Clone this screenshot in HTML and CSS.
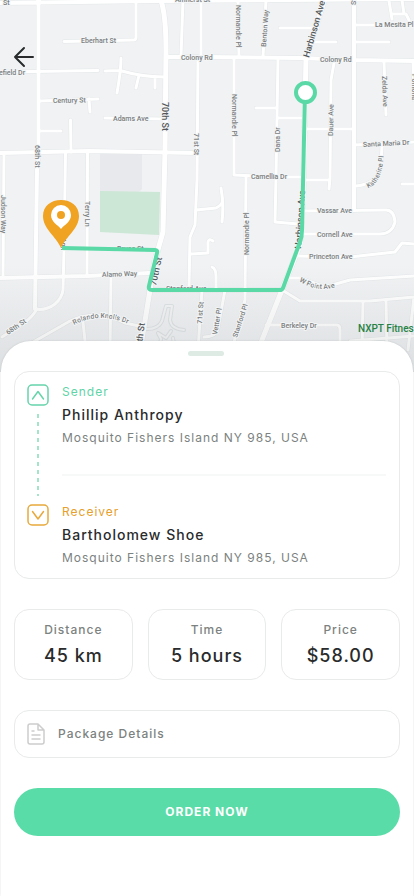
FILE: index.html
```html
<!DOCTYPE html>
<html lang="en">
<head>
<meta charset="utf-8">
<meta name="viewport" content="width=device-width, initial-scale=1">
<title>Order delivery</title>
<link rel="stylesheet" href="styles.css">
</head>
<body>
<main class="screen">
  <section class="map" aria-label="Delivery route">
    <svg class="map-art" viewBox="0 0 414 372" preserveAspectRatio="xMidYMin slice" role="img" aria-label="Street map">
      <defs>
        <g id="minor">
          <path d="M64 41.500L134 40Q136 40 136 37V2"/>
          <path d="M0 72L98 70.500M105 71L120 70.500Q142 77 165 77M121 58Q121 70 117 93M139 75L136 88M155 77V88"/>
          <path d="M40 101L98 99M89 99L90 112M105 118L163 119M70.500 120L71 152M40 131H61"/>
          <path d="M4 153L3 277M65.500 153L64 250L63 290Q62 298 55 304Q46 311 35 309M87.500 153L87 275"/>
          <path d="M183 0L181 56M201 0V56M198 57L197 180L195 225L190 237L189 288M191 254L208 253V242Q209 238 213 241M196 210L216 208Q220 206 222 203M221 188Q224 204 222 222"/>
          <path d="M238 0L239 57M266 0L263 57M280 28H318M312 42H336M234 58V175L275 177H300M246 177L245 300L232 350"/>
          <path d="M278 58L276 177L275 222L298 224M256 108H277M277 118H301M334 63L331 80L330 178L329 189M303 129H354M303 180H330"/>
          <path d="M354 25H414M354 42H389M384 62L386 115M413 62L414 100M354 145L414 142M382 145L381 165Q378 184 356 186M402 184H414"/>
          <path d="M389 1L392 19M391 14H406L409 20M402 0L404 14"/>
          <path d="M303 211L386 210Q394 210 395 222Q392 234 380 234H303M297 256L350 257L395 252L402 243L414 244M288 278H300L325 287L350 280L414 276"/>
          <path d="M282 290L300 301H370L414 297M363 302L362 350M386 301L387 350M414 297L408 350M266 325H337Q340 325 340 330V350M350 341L414 336"/>
          <path d="M202 290L198 350M225 290L218 328Q216 337 204 337M212 267Q216 269 216 276V288"/>
          <path d="M111 278L110 350M28 345L70 321Q98 308 125 323L144 327M83 322L86 350"/>
          <path d="M37 309Q31 319 22 324L2 337"/>
        </g>
        <g id="court">
          <path d="M144 329Q158 330 162 321L166 306H172L170 320Q171 329 184 330M158 333L166 338L171 331M160 344L161 339L158 333M173 338L174 344"/>
        </g>
        <g id="major">
          <path d="M0 3L160 1L414 -1M38.500 0V155L37 170L35 309M0 153L90 151L197 153M0 278L87 276L150 273M168 57H204L300 58L354 60L414 61M354 0V210M149 290H282"/>
        </g>
        <g id="avenue">
          <path d="M160 -2Q166 12 166 50L165 150L163 232L155 260L150 290L140 352M325 -2L306 58L303 200L300 245L282 290L258 350"/>
        </g>
        <linearGradient id="shade" x1="0" y1="0" x2="0" y2="1">
          <stop offset="0" stop-color="#777c80" stop-opacity="0"/>
          <stop offset="1" stop-color="#777c80" stop-opacity=".16"/>
        </linearGradient>
      </defs>
      <rect class="land" width="414" height="372"/>
      <path class="block" d="M100 152H142V189L139 192H100Z"/>
      <path class="park" d="M100 191L160 192L159 235L100 232Z"/>
      <use href="#minor" class="road minor-edge"/>
      <use href="#court" class="road court-edge"/>
      <use href="#major" class="road major-edge"/>
      <use href="#avenue" class="road avenue-edge"/>
      <use href="#minor" class="road minor-fill"/>
      <use href="#court" class="road court-fill"/>
      <use href="#major" class="road major-fill"/>
      <use href="#avenue" class="road avenue-fill"/>
      <rect y="265" width="414" height="107" fill="url(#shade)"/>

      <g class="street">
        <text x="3" y="5">St</text>
        <text x="175" y="2">Amherst St</text>
        <text x="81" y="43">Eberhart St</text>
        <text x="-1" y="75">efield Dr</text>
        <text x="53" y="103" transform="rotate(-1 53 103)">Century St</text>
        <text x="113" y="121">Adams Ave</text>
        <text x="181" y="60">Colony Rd</text>
        <text x="320" y="62">Colony Rd</text>
        <text x="375" y="27">La Mesita Pl</text>
        <text x="363" y="147" transform="rotate(-3 363 147)">Santa Maria Dr</text>
        <text x="251" y="179">Camellia Dr</text>
        <text x="317" y="213">Vassar Ave</text>
        <text x="317" y="237">Cornell Ave</text>
        <text x="309" y="259">Princeton Ave</text>
        <text x="281" y="328">Berkeley Dr</text>
        <text x="117" y="251">Bruce St</text>
        <text x="102" y="277" transform="rotate(-2 102 277)">Alamo Way</text>
        <text x="166" y="291">Stanford Ave</text>
        <text transform="translate(35 145) rotate(90)">68th St</text>
        <text transform="translate(194 133) rotate(90)">71st St</text>
        <text transform="translate(236 5) rotate(90)">Normandie Pl</text>
        <text transform="translate(232 94) rotate(90)">Normandie Pl</text>
        <text transform="translate(249 255) rotate(-90)">Normandie Pl</text>
        <text transform="translate(266 47) rotate(-86)">Benton Way</text>
        <text transform="translate(280 152) rotate(-90)">Dana Dr</text>
        <text transform="translate(333 136) rotate(-89)">Dauer Ave</text>
        <text transform="translate(382 76) rotate(88)">Zelda Ave</text>
        <text transform="translate(356 5) rotate(-90)">St</text>
        <text transform="translate(1 195) rotate(90)">Judson Way</text>
        <text transform="translate(85 201) rotate(90)">Terry Ln</text>
        <text transform="translate(61 238) rotate(90)">Ann</text>
        <text transform="translate(202 324) rotate(-86)">71st St</text>
        <text transform="translate(217 335) rotate(-80)">Vetter Pl</text>
        <text transform="translate(237 338) rotate(-72)">Stanford Pl</text>
        <text transform="translate(8 335) rotate(-34)">68th St</text>
        <path id="rolando" fill="none" d="M74 325Q100 311 131 325"/>
        <text><textPath href="#rolando">Rolando Knolls Dr</textPath></text>
        <path id="point" fill="none" d="M299 281Q322 296 344 283"/>
        <text><textPath href="#point">W Point Ave</textPath></text>
        <path id="katherine" fill="none" d="M368 188Q384 183 384 146"/>
        <text><textPath href="#katherine">Katherine Pl</textPath></text>
        <text transform="translate(412 74) rotate(90)">Pomona</text>
      </g>
      <g class="street street-main">
        <text transform="translate(162 102) rotate(90)">70th St</text>
        <text transform="translate(309 58) rotate(-74)">Harbinson Ave</text>
        <text transform="translate(301 249) rotate(-86)">Harbinson Ave</text>
        <text transform="translate(156 286) rotate(-78)">70th St</text>
        <text transform="translate(141 352) rotate(-82)">70th St</text>
      </g>
      <text class="place" x="358" y="332">NXPT Fitness</text>

      <path class="route" d="M62 248L155 250Q158 250 157 253L149 286Q148 290 152 290H280Q282 290 283 288L300 242Q302 237 302 230L305 93"/>
      <circle class="origin" cx="305.500" cy="92.500" r="9.500"/>
      <path class="pin" d="M61 248C56 236 43 229 43 216C43 206 51 200 61 200C71 200 79 206 79 216C79 229 66 236 61 248Z"/>
      <path class="pin-hole" d="M61 229C58 225 51 222 51 215A10 10 0 0 1 71 215C71 222 64 225 61 229Z"/>
      <circle class="pin" cx="61" cy="215" r="4"/>
    </svg>
    <button class="back" type="button" aria-label="Back">
      <svg width="22" height="22" viewBox="0 0 22 22"><path d="M20 11H2M11 2L2 11L11 20"/></svg>
    </button>
  </section>

  <section class="sheet">
    <div class="grip"></div>
    <div class="card trip">
      <div class="track">
        <svg class="box send" width="22" height="22" viewBox="0 0 22 22"><rect x="1" y="1" width="20" height="20" rx="4"/><path d="M5.500 15L11 7.500L16.500 15"/></svg>
        <span class="dashes"></span>
        <svg class="box receive" width="22" height="22" viewBox="0 0 22 22"><rect x="1" y="1" width="20" height="20" rx="4"/><path d="M5.500 7.500L11 15L16.500 7.500"/></svg>
      </div>
      <div class="people">
        <div class="person">
          <span class="role send-text">Sender</span>
          <strong class="name">Phillip Anthropy</strong>
          <span class="address">Mosquito Fishers Island NY 985, USA</span>
        </div>
        <hr class="rule">
        <div class="person">
          <span class="role receive-text">Receiver</span>
          <strong class="name">Bartholomew Shoe</strong>
          <span class="address">Mosquito Fishers Island NY 985, USA</span>
        </div>
      </div>
    </div>

    <dl class="stats">
      <div class="card stat"><dt>Distance</dt><dd>45 km</dd></div>
      <div class="card stat"><dt>Time</dt><dd>5 hours</dd></div>
      <div class="card stat"><dt>Price</dt><dd>$58.00</dd></div>
    </dl>

    <button class="card package" type="button">
      <svg width="18" height="22" viewBox="0 0 18 22"><path d="M11 1H3Q1 1 1 3V19Q1 21 3 21H15Q17 21 17 19V7ZM11 1V7H17M5 8H7M5 12H13M5 16H13"/></svg>
      <span>Package Details</span>
    </button>

    <button class="order" type="button">ORDER NOW</button>
  </section>
</main>
</body>
</html>
```

FILE: styles.css
```css
* { box-sizing: border-box; }

body {
  margin: 0;
  background: #fff;
  color: #292b2c;
  font-family: Inter, "Liberation Sans", sans-serif;
  font-size: 12px;
  line-height: 16px;
  letter-spacing: 1px;
}

button {
  font: inherit;
  letter-spacing: inherit;
  cursor: pointer;
}

.screen {
  display: flex;
  flex-direction: column;
  min-height: 100vh;
}

/* Map */
.map {
  position: relative;
  height: 372px;
  overflow: hidden;
}

.map-art { display: block; width: 100%; height: 100%; }

.land { fill: #f0f2f4; }
.block { fill: #e7e9ed; }
.park { fill: #cce7d5; }

.road { fill: none; stroke-linecap: round; stroke-linejoin: round; }
.minor-edge { stroke: #e4e7e8; stroke-width: 4px; }
.minor-fill { stroke: #fff; stroke-width: 3px; }
.court-edge { stroke: #dfe2e4; stroke-width: 4px; }
.court-fill { stroke: #f3f5f6; stroke-width: 2px; }
.major-edge { stroke: #e4e7e8; stroke-width: 5px; }
.major-fill { stroke: #fff; stroke-width: 4px; }
.avenue-edge { stroke: #e4e7e8; stroke-width: 6px; }
.avenue-fill { stroke: #fff; stroke-width: 5px; }

.street {
  font-family: Roboto, sans-serif;
  font-size: 7px;
  font-weight: 500;
  letter-spacing: 0;
}

.street text {
  fill: #7b7e80;
  stroke: #f3f5f6;
  stroke-width: 2px;
  stroke-linejoin: round;
  paint-order: stroke;
}

.street-main { font-size: 9px; }
.street-main text { fill: #55585a; }

.place {
  fill: #268244;
  font-family: Roboto, sans-serif;
  font-size: 10px;
  font-weight: 500;
  letter-spacing: 0;
}

.route {
  fill: none;
  stroke: #5ad9a6;
  stroke-width: 4px;
  stroke-linecap: butt;
  stroke-linejoin: round;
}

.origin { fill: #fff; stroke: #5ad9a6; stroke-width: 4px; }
.pin { fill: #f0a322; }
.pin-hole { fill: #fff; }

.back {
  position: absolute;
  top: 46px;
  left: 13px;
  padding: 0;
  border: 0;
  background: none;
}

.back svg {
  display: block;
  fill: none;
  stroke: #292b2c;
  stroke-width: 2px;
  stroke-linecap: round;
  stroke-linejoin: round;
}

/* Bottom sheet */
.sheet {
  position: relative;
  display: flex;
  flex: 1;
  flex-direction: column;
  gap: 30px;
  margin: -31px 1px 0;
  padding: 30px 13px 60px;
  border-radius: 30px 30px 0 0;
  background: #fff;
  box-shadow: 0 0 2px rgba(60, 70, 75, .2);
}

.grip {
  position: absolute;
  top: 10px;
  left: 50%;
  width: 36px;
  height: 5px;
  margin-left: -19px;
  border-radius: 3px;
  background: #deebe4;
}

.card {
  border: 1px solid #e9eaea;
  border-radius: 15px;
  background: #fff;
}

.trip {
  display: flex;
  gap: 13px;
  padding: 12px 13px 12px 12px;
}

.track {
  display: flex;
  flex-direction: column;
  align-items: center;
  gap: 8px;
  padding-bottom: 40px;
}

.box {
  flex: none;
  fill: none;
  stroke-width: 1.5;
  stroke-linecap: round;
  stroke-linejoin: round;
}

.send { stroke: #66d4aa; }
.receive { stroke: #e7a93c; }
.send-text { color: #5fd4a6; }
.receive-text { color: #e6a02b; }

.dashes {
  flex: 1;
  width: 2px;
  background: repeating-linear-gradient(#a4e4cb 0 4px, transparent 4px 8px);
}

.people { flex: 1; }

.person {
  display: flex;
  flex-direction: column;
  gap: 5px;
}

.name {
  font-size: 14px;
  font-weight: 500;
  line-height: 20px;
}

.address { color: #7c8280; }

.rule {
  height: 2px;
  margin: 28px 0;
  border: 0;
  background: #f7f8f8;
}

.stats {
  display: grid;
  grid-template-columns: repeat(3, 1fr);
  gap: 15px;
  margin: 0;
}

.stat {
  display: flex;
  flex-direction: column;
  gap: 6px;
  padding: 12px 0 11px;
  text-align: center;
}

.stat dt {
  color: #7c8280;
  font-weight: 500;
}

.stat dd {
  margin: 0;
  font-size: 18px;
  font-weight: 500;
  line-height: 24px;
}

.package {
  display: flex;
  align-items: center;
  gap: 13px;
  height: 48px;
  padding: 0 12px;
  color: #7c8280;
  font-weight: 500;
}

.package svg {
  fill: none;
  stroke: #cdcdcd;
  stroke-width: 1.5;
  stroke-linecap: round;
  stroke-linejoin: round;
}

.order {
  height: 48px;
  border: 0;
  border-radius: 24px;
  background: #59dca7;
  color: #fff;
  font-weight: 700;
}
```
